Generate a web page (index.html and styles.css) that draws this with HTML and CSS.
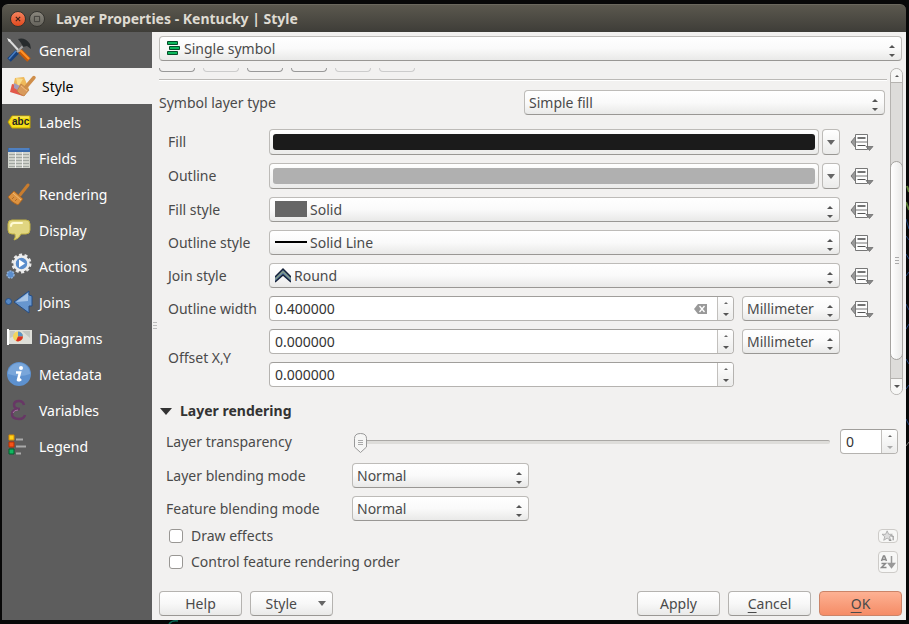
FILE: index.html
```html
<!DOCTYPE html>
<html lang="en">
<head>
<meta charset="utf-8">
<title>Layer Properties - Kentucky | Style</title>
<link rel="stylesheet" href="styles.css">
</head>
<body>
<svg class="sprites" aria-hidden="true">
  <symbol id="override" viewBox="0 0 24 20">
    <path d="M6 4v12L1 10z" fill="#999" stroke="#777"/>
    <path d="M5.500 2.500h12v15h-12zM5.500 10h12" fill="#fdfdfd" stroke="#777"/>
    <path d="M7.500 6h8" stroke="#444" stroke-width="1.500"/><path d="M7.500 13.500h8" stroke="#555"/>
    <path d="M16 14.500h7l-3.500 4z" fill="#888" stroke="#666" stroke-width=".7"/>
  </symbol>
</svg>
<svg class="map-edge" viewBox="0 0 3 300" aria-hidden="true"><path d="M1 2l2 6M0 18l3 8" stroke="#5b7d35" stroke-width="2"/><path d="M0 35l3 10M0 52l3 4M0 70l3 5M0 92l3-4M0 120l3 6M0 145l3-5M0 175l3 5M0 205l3-4M0 235l3 6" stroke="#20427c" fill="none"/><path d="M0 262l3-4" stroke="#777"/></svg>
<svg class="map-foot" viewBox="0 0 12 4" aria-hidden="true"><path d="M1 4q3-4 9-3" fill="none" stroke="#0b6b58" stroke-width="1.500"/></svg>
<div class="window">
  <header class="titlebar">
    <button class="win-btn close" aria-label="Close"><svg viewBox="0 0 16 16"><path d="M5.500 5.500l5 5m0-5l-5 5" stroke="#3c2018" stroke-width="1.300"/></svg></button>
    <button class="win-btn" aria-label="Maximize"><svg viewBox="0 0 16 16"><path d="M5 5h6v6H5z" fill="none" stroke="#3a3935"/></svg></button>
    <h1>Layer Properties - Kentucky | Style</h1>
  </header>
  <div class="body">
    <nav class="sidebar">
      <a href="#general"><svg viewBox="0 0 24 24"><path d="M2 2l11 12" stroke="#ddd" stroke-width="2"/><path d="M0 0l4 2-2 2z" fill="#eee"/><path d="M13 13l9 9" stroke="#c85a08" stroke-width="5"/><path d="M13 12l9 9" stroke="#ff9226" stroke-width="2"/><path d="M10 14L2 22" stroke="#17417d" stroke-width="5"/><path d="M9 13l-7 8" stroke="#4c80c3" stroke-width="1.500"/><path d="M10 14l9-9" stroke="#aaa" stroke-width="2"/><path d="M11 1q7-2 12 5l1 5-4-3-4 1-2-4z" fill="#272b2d"/></svg>General</a>
      <a href="#style" class="current" aria-current="page"><svg viewBox="0 0 24 24"><path d="M5 4l9-1 5 12-5 7L2 17z" fill="#efb95a"/><path d="M2 10l8 2 3 10L0 18z" fill="#e2584a"/><path d="M6 4l7 1-5 8z" fill="#f8dc8c"/><path d="M4 9l6 3-1 5-5-3z" fill="#a49bb8"/><path d="M11 10l8 6-5 6q-4-1-7-5z" fill="#d99a5b" stroke="#b97a3e" stroke-width=".7"/><path d="M15.500 13.500L24 3.500" stroke="#cf8e4a" stroke-width="3.500" stroke-linecap="round"/><path d="M11 12l6 5" stroke="#f2be7c"/></svg>Style</a>
      <a href="#labels"><svg viewBox="0 0 24 24"><path d="M1 12l4-6h18v12H5z" fill="#f5dd16" stroke="#c4a300"/><path d="M5.500 7H22" stroke="#fff27c"/><text x="5" y="15" class="abc">abc</text></svg>Labels</a>
      <a href="#fields"><svg viewBox="0 0 24 24"><path d="M1 2h22v20H1z" fill="#d0d3cc"/><path d="M1 2h22v4H1z" fill="#3769ac"/><path d="M2 3h20" stroke="#6898d5"/><path d="M2 8.500h20M2 11.500h20M2 14.500h20M2 17.500h20M2 20.500h20" stroke="#a2a7a2"/><path d="M8.500 6v16M15.500 6v16" stroke="#eee"/></svg>Fields</a>
      <a href="#rendering"><svg viewBox="0 0 24 24"><path d="M13 13l8-10" stroke="#c87c2e" stroke-width="3" stroke-linecap="round"/><path d="M7 9l9 8-5 6q-6-2-10-8z" fill="#dc9240" stroke="#a65f1c" stroke-width=".8"/><path d="M6 11l8 7" stroke="#f0bb73"/><path d="M5 17l2-2m1 4l2-2" stroke="#b66c24"/></svg>Rendering</a>
      <a href="#display"><svg viewBox="0 0 24 24"><path d="M5 2h14q4 0 4 4v6q0 4-4 4h-5q-2 5-7 6 2-3 1-6H5q-4 0-4-4V6q0-4 4-4z" fill="#e1d681" stroke="#c2b345"/><path d="M4 8q0-3 3-3h8" fill="none" stroke="#fffbd3" stroke-width="2" stroke-linecap="round"/></svg>Display</a>
      <a href="#actions"><svg viewBox="0 0 24 24"><circle cx="14.500" cy="9.500" r="8.500" fill="none" stroke="#e8e8e8" stroke-width="3" stroke-dasharray="3 2.340"/><circle cx="14.500" cy="9.500" r="7" fill="#5a8dcc" stroke="#eee" stroke-width="2.500"/><path d="M12 5.500l6 4-6 4z" fill="#fff"/><circle cx="3.500" cy="20.500" r="3.500" fill="#5a8dcc" stroke="#8fb0d8" stroke-width="1.500" stroke-dasharray="2 1"/></svg>Actions</a>
      <a href="#joins"><svg viewBox="0 0 24 24"><path d="M7 12L22 1v4l3 1v10h-3v7z" fill="#6796ce" stroke="#244c84"/><path d="M9 12L21 3v8z" fill="#a8c4e5"/><circle cx="1.500" cy="11.500" r="3" fill="#5488c6" stroke="#274e83"/></svg>Joins</a>
      <a href="#diagrams"><svg viewBox="0 0 24 24"><path d="M0 4h25v14H0z" fill="#dedfd9"/><path d="M0 3h2v16H0z" fill="#fff"/><path d="M3 5h5l-1 5-4 2zm12 0h8v7z" fill="#c3c6c1"/><circle cx="11" cy="10.500" r="5" fill="#f1d55d"/><path d="M11 10.500v-5a5 5 0 0 1 5 5z" fill="#5d92c6"/><path d="M11 10.500h5a5 5 0 0 1-7 4.500z" fill="#d92e23"/></svg>Diagrams</a>
      <a href="#metadata"><svg viewBox="0 0 24 24"><circle cx="12" cy="12" r="12" fill="#5d91cf"/><path d="M1 12a11 11 0 0 1 22 0q-10 4-22 0z" fill="#79a6da"/><circle cx="14" cy="6" r="2" fill="#fff"/><path d="M9 10.500h4L11 18q1 1 3-1" fill="none" stroke="#fff" stroke-width="2.500"/></svg>Metadata</a>
      <a href="#variables"><svg viewBox="0 0 24 24"><path d="M17 7q-1-4-5-4-5 0-5 4 0 4 6 4-8 0-8 5t7 5q5 0 6-4" fill="none" stroke="#673765" stroke-width="2.500"/><path d="M6 15q1-3 5-3" fill="none" stroke="#a775a5"/></svg>Variables</a>
      <a href="#legend"><svg viewBox="0 0 24 24"><path d="M2 1h5v5H2z" fill="#ffd21c" stroke="#d98c00"/><path d="M2 8h5v5H2z" fill="#f55419" stroke="#b92e00"/><path d="M2 15h5v5H2z" fill="#10b760" stroke="#00602d"/><path d="M9 5.500h7M9 12.500h10M9 19.500h5" stroke="#aaa" stroke-width="2"/></svg>Legend</a>
    </nav>
    <div class="splitter"></div>
    <main>
      <div class="select renderer">
        <svg class="lead" viewBox="0 0 14 14"><path d="M1.500.5h10v3h-10zM3.500 5.500h10v3h-10zM1.500 10.500h10v3h-10z" fill="#0db85d" stroke="#064d2a"/></svg>
        <select aria-label="Renderer"><option>Single symbol</option></select>
      </div>
      <div class="scroller">
        <section class="symbol">
          <div class="tools"><i></i><i class="off"></i><i></i><i></i><i class="off"></i><i class="off"></i></div>
          <div class="type-row">
            <label for="type">Symbol layer type</label>
            <div class="select"><select id="type"><option>Simple fill</option></select></div>
          </div>
          <div class="form">
            <label for="fill">Fill</label>
            <div class="color"><button id="fill" class="swatch"><span class="dark"></span></button><button class="drop" aria-label="Fill menu"></button></div>
            <button class="override" aria-label="Fill override"><svg><use href="#override"/></svg></button>

            <label for="outline">Outline</label>
            <div class="color"><button id="outline" class="swatch"><span></span></button><button class="drop" aria-label="Outline menu"></button></div>
            <button class="override" aria-label="Outline override"><svg><use href="#override"/></svg></button>

            <label for="fstyle">Fill style</label>
            <div class="select wide-lead"><svg class="lead" viewBox="0 0 32 16"><path d="M0 0h32v16H0z" fill="#666"/></svg><select id="fstyle"><option>Solid</option></select></div>
            <button class="override" aria-label="Fill style override"><svg><use href="#override"/></svg></button>

            <label for="ostyle">Outline style</label>
            <div class="select wide-lead"><svg class="lead" viewBox="0 0 32 16"><path d="M0 8h32" stroke="#000" stroke-width="2"/></svg><select id="ostyle"><option>Solid Line</option></select></div>
            <button class="override" aria-label="Outline style override"><svg><use href="#override"/></svg></button>

            <label for="join">Join style</label>
            <div class="select mid-lead"><svg class="lead" viewBox="0 0 16 16"><path d="M0 10l8-8 8 8v5l-8-7-8 7z" fill="#5b7ca5"/><path d="M0 10l8-8 8 8M0 15l8-7 8 7" fill="none" stroke="#162238" stroke-width="1.500"/><path d="M0 12.500l8-8 8 8" fill="none" stroke="#a4b46c"/></svg><select id="join"><option>Round</option></select></div>
            <button class="override" aria-label="Join style override"><svg><use href="#override"/></svg></button>

            <label for="width">Outline width</label>
            <div class="measure">
              <div class="spin"><input id="width" value="0.400000"><button class="clear" aria-label="Clear"><svg viewBox="0 0 13 10"><path d="M0 5l4-5h9v10H4z" fill="#999"/><path d="M5.500 2l5 6m0-6l-5 6" stroke="#fff" stroke-width="1.300"/></svg></button><span class="steps"><button aria-label="Increase"></button><button aria-label="Decrease"></button></span></div>
              <div class="select"><select aria-label="Width unit"><option>Millimeter</option></select></div>
            </div>
            <button class="override" aria-label="Width override"><svg><use href="#override"/></svg></button>

            <label for="offx" class="two-rows">Offset X,Y</label>
            <div class="measure">
              <div class="spin"><input id="offx" value="0.000000"><span class="steps"><button aria-label="Increase"></button><button aria-label="Decrease"></button></span></div>
              <div class="select"><select aria-label="Offset unit"><option>Millimeter</option></select></div>
            </div>
            <div class="measure second">
              <div class="spin"><input aria-label="Offset Y" value="0.000000"><span class="steps"><button aria-label="Increase"></button><button aria-label="Decrease"></button></span></div>
            </div>
          </div>
        </section>
        <div class="scrollbar"><div class="cap up"></div><div class="track-top"></div><div class="thumb"></div><div class="track-end"></div><div class="cap down"></div></div>
      </div>
      <section class="rendering">
        <h2>Layer rendering</h2>
        <div class="line transparency">
          <label for="alpha">Layer transparency</label>
          <div class="slider"><input id="alpha" type="range" min="0" max="100" value="0"></div>
          <div class="spin"><input aria-label="Transparency value" value="0"><span class="steps at-min"><button aria-label="Increase"></button><button aria-label="Decrease"></button></span></div>
        </div>
        <div class="line"><label for="lblend">Layer blending mode</label><div class="select"><select id="lblend"><option>Normal</option></select></div></div>
        <div class="line"><label for="fblend">Feature blending mode</label><div class="select"><select id="fblend"><option>Normal</option></select></div></div>
        <div class="checks">
        <div class="check"><label><input type="checkbox">Draw effects</label>
          <button class="mini short" aria-label="Customize effects" disabled><svg viewBox="0 0 16 14"><path d="M7 1l1.800 4H13l-3.200 2.800L11 12 7 9.500 3 12l1.200-4.200L1 5h4.200z" fill="#ddd" stroke="#aaa"/><path d="M11 7h3v5M9 12h3" fill="none" stroke="#777"/></svg></button></div>
        <div class="check"><label><input type="checkbox">Control feature rendering order</label>
          <button class="mini" aria-label="Define order" disabled><svg viewBox="0 0 16 16"><path d="M1.500 7l2-5h1l2 5M2.500 5.500h3M1.500 9.500h4l-4 4h5" fill="none" stroke="#888" stroke-width="1.500"/><path d="M11.500 2v8M8.500 9.500h6l-3 4z" fill="#999" stroke="#999" stroke-width="1.500"/></svg></button></div>
        </div>
      </section>
      <footer>
        <button class="btn">Help</button><button class="btn menu">Style</button><span class="gap"></span><button class="btn">Apply</button><button class="btn"><u>C</u>ancel</button><button class="btn ok"><u>O</u>K</button>
      </footer>
    </main>
  </div>
</div>
</body>
</html>
```
FILE: styles.css
```css
* { box-sizing: border-box; }
body {
  position: relative;
  margin: 0;
  min-height: 100vh;
  padding: 4px 3px 4px 2px;
  display: flex;
  background: #080808;
  color: #4a4a4a;
  font: 14px/20px "Noto Sans", "Open Sans", sans-serif;
}
button, input, select { font: inherit; color: inherit; margin: 0; padding: 0; }
.sprites { position: absolute; width: 0; height: 0; }
.map-edge { position: absolute; right: 0; top: 184px; width: 3px; height: 300px; }
.map-foot { position: absolute; left: 168px; bottom: 0; width: 12px; height: 4px; }
.window { flex: 1; display: flex; flex-direction: column; min-width: 0; }

.titlebar {
  height: 28px;
  padding: 0 8px;
  display: flex;
  align-items: center;
  gap: 3px;
  border-radius: 6px 6px 0 0;
  background: linear-gradient(#5b584e, #3e3d38);
  border-top: 1px solid #6b685e;
}
.titlebar h1 { margin: 0 0 0 8px; font-size: 14px; color: #dfdbd2; }
.win-btn { width: 16px; height: 16px; border: 1px solid #35342f; border-radius: 50%; background: linear-gradient(#8a877d, #65635c); }
.win-btn svg { display: block; width: 14px; height: 14px; }
.win-btn.close { background: linear-gradient(#f4835e, #e0491e); }

.body { flex: 1; display: flex; background: #f2f1f0; }
.sidebar { width: 150px; flex: none; background: #5d5d5d; }
.sidebar a {
  height: 36px;
  padding: 2px 0 0 5px;
  display: flex;
  align-items: center;
  gap: 8px;
  color: #fff;
  text-decoration: none;
}
.sidebar a.current { background: #f2f1f0; color: #000; padding-left: 8px; }
.sidebar svg { width: 24px; height: 24px; margin-bottom: 2px; overflow: visible; }
.abc { font: bold 10px "Liberation Sans", sans-serif; fill: #222; }
.splitter { width: 6px; flex: none; display: flex; align-items: center; }
.splitter::before { content: ""; width: 4px; height: 8px; margin-left: 1px; background: repeating-linear-gradient(#bbb 0 1px, #f2f1f0 1px 3px); }

main { flex: 1; min-width: 0; padding: 4px 4px 4px 1px; display: flex; flex-direction: column; }

.select { position: relative; height: 25px; }
.select select {
  appearance: none;
  display: block;
  width: 100%;
  height: 100%;
  padding: 0 20px 0 4px;
  border: 1px solid #bdbbb8;
  border-bottom-color: #999794;
  border-radius: 4px;
  background: linear-gradient(#fff, #fafafa 50%, #e9e9e8);
}
.select::before, .select::after {
  content: "";
  position: absolute;
  right: 7px;
  border: 3px solid transparent;
  pointer-events: none;
}
.select::before { top: 6px; border-bottom-color: #555; }
.select::after { bottom: 1px; border-top-color: #555; }
.lead { position: absolute; left: 6px; top: 4px; width: 32px; height: 16px; }
.renderer .lead { left: 7px; top: 5px; width: 14px; height: 14px; }
.renderer select { padding-left: 24px; }
.wide-lead select { padding-left: 40px; }
.mid-lead .lead { width: 16px; }
.mid-lead select { padding-left: 24px; }

.scroller { display: flex; gap: 3px; margin-top: 7px; }
.symbol { flex: 1; min-width: 0; padding-bottom: 8px; }
.tools { display: flex; gap: 8px; height: 12px; border-bottom: 1px solid #bbb9b6; box-shadow: 0 1px #fff; }
.tools i { width: 36px; height: 4px; border: 1px solid #999; border-top: 0; border-radius: 0 0 5px 5px; }
.tools .off { border-color: #ccc; }
.type-row { display: flex; align-items: center; justify-content: space-between; margin: 10px 2px 14px 0; }
.type-row .select { width: 50%; max-width: 361px; }
.form { display: grid; grid-template-columns: 93px minmax(0, 1fr) 24px; gap: 8px; padding: 0 15px 0 9px; align-items: center; }
.form label { white-space: nowrap; }
.color { display: flex; gap: 3px; height: 26px; }
.swatch, .drop { border: 1px solid #bdbbb8; border-bottom-color: #999794; border-radius: 4px; background: linear-gradient(#fff, #ebebea); }
.swatch { flex: 1; padding: 3px; }
.swatch span { display: block; height: 16px; border-radius: 3px; background: #b0b0b0; }
.swatch .dark { background: #1b1b1b; }
.drop { width: 18px; display: grid; place-items: center; }
.drop::before, .menu::after { content: ""; border: 4px solid transparent; border-top: 5px solid #666; border-bottom: 0; }
.override { width: 24px; height: 20px; margin-left: 2px; border: 0; background: none; }
.override svg { display: block; width: 24px; height: 20px; }
.measure { display: flex; gap: 8px; }
.measure .select { width: 98px; flex: none; }
.measure.second { grid-column: 2; padding-right: 106px; }
.two-rows { grid-row: span 2; }
.measure .spin { flex: 1; }

.spin { display: flex; height: 25px; min-width: 0; border: 1px solid #b5b3b0; border-top-color: #a09e9b; border-radius: 4px; background: #fff; overflow: hidden; }
.spin input { flex: 1; min-width: 0; width: 0; border: 0; background: none; padding-left: 5px; color: #333; }
.clear { width: 13px; margin-right: 10px; border: 0; background: none; }
.clear svg { display: block; width: 13px; height: 10px; }
.steps { width: 16px; display: flex; flex-direction: column; border-left: 1px solid #c2c0bd; background: linear-gradient(#fff, #ececeb); }
.steps button { flex: 1; border: 0; background: none; display: grid; place-items: center; }
.steps button::before { content: ""; border: 2px solid transparent; border-top: 0; border-bottom: 2px solid #666; }
.steps button + button::before { border: 3px solid transparent; border-bottom: 0; border-top: 3px solid #555; }
.steps.at-min button + button::before { border-top-color: #aaa; }

.scrollbar { width: 13px; margin-right: -1px; flex: none; display: flex; flex-direction: column; border: 1px solid #b5b3b0; border-radius: 7px; background: #dddcda; }
.cap { height: 17px; flex: none; display: grid; place-items: center; border-radius: 7px 7px 0 0; background: #f7f7f6; }
.cap::before { content: ""; border: 2px solid transparent; border-top: 0; border-bottom: 2px solid #555; }
.cap.up { height: 13px; }
.cap.down { height: 15px; border-radius: 0 0 7px 7px; }
.cap.down::before { border: 3px solid transparent; border-bottom: 0; border-top: 3px solid #555; }
.track-top { flex: 80; border-top: 1px solid #b5b3b0; }
.thumb { flex: 201; margin: 0 -1px; border: 1px solid #a5a3a0; border-radius: 7px; background: linear-gradient(90deg, #fff, #eaeae9); display: grid; place-items: center; }
.thumb::before { content: ""; width: 4px; height: 8px; background: repeating-linear-gradient(#aaa 0 1px, transparent 1px 3px); }
.track-end { flex: 18; border-bottom: 1px solid #b5b3b0; }

.rendering { margin-top: 6px; padding: 0 4px 0 7px; }
.rendering h2 { display: flex; align-items: center; gap: 8px; margin: 0 0 0 -6px; font-size: 14px; line-height: 20px; color: #333; }
.rendering h2::before { content: ""; border: 6px solid transparent; border-top: 7px solid #333; border-bottom: 0; }
.line { display: grid; grid-template-columns: 178px 177px; gap: 8px; align-items: center; margin-top: 8px; }
.transparency { grid-template-columns: 178px minmax(0, 1fr) 58px; margin-bottom: 9px; }
.line label { white-space: nowrap; }
.slider { padding: 0 2px; }
input[type="range"] { appearance: none; display: block; height: 22px; width: 100%; background: none; }
input[type="range"]::-webkit-slider-runnable-track { height: 4px; border-top: 1px solid #aaa8a5; border-radius: 2px; background: #deddda; }
input[type="range"]::-webkit-slider-thumb {
  appearance: none;
  width: 13px;
  height: 20px;
  margin-top: -8px;
  background: url("data:image/svg+xml,%3Csvg xmlns='http://www.w3.org/2000/svg' viewBox='0 0 13 20'%3E%3Cpath d='M.5 5.500q0-5 6-5t6 5V14l-6 5.500L.5 14z' fill='%23f6f6f5' stroke='%23999'/%3E%3Cpath d='M4 7.500h5M4 9.500h5M4 11.500h5' stroke='%23aaa'/%3E%3C/svg%3E");
}
.checks { margin-top: 2px; }
.check { display: flex; align-items: center; justify-content: space-between; height: 26px; }
.check label { display: flex; align-items: center; gap: 8px; padding-left: 3px; }
.check input { appearance: none; width: 14px; height: 14px; border: 1px solid #999794; border-radius: 3px; background: #fff; }
.mini { width: 20px; height: 22px; padding: 1px; border: 1px solid #cdcbc8; border-radius: 4px; background: #f7f7f6; }
.mini.short { height: 14px; padding: 0; }
.mini svg { display: block; margin: auto; width: 16px; height: 16px; }
.mini.short svg { height: 12px; }

footer { display: flex; gap: 8px; margin-top: auto; }
.gap { flex: 1; }
.btn { width: 83px; height: 25px; border: 1px solid #b5b3b0; border-bottom-color: #999794; border-radius: 4px; background: linear-gradient(#fff, #f8f8f8 50%, #e9e9e8); }
.btn u { text-underline-offset: 3px; }
.menu { display: flex; align-items: center; justify-content: flex-end; gap: 21px; padding-right: 6px; }
.ok { background: linear-gradient(#fdb193, #f58c66); border-color: #cb8468; }
```
